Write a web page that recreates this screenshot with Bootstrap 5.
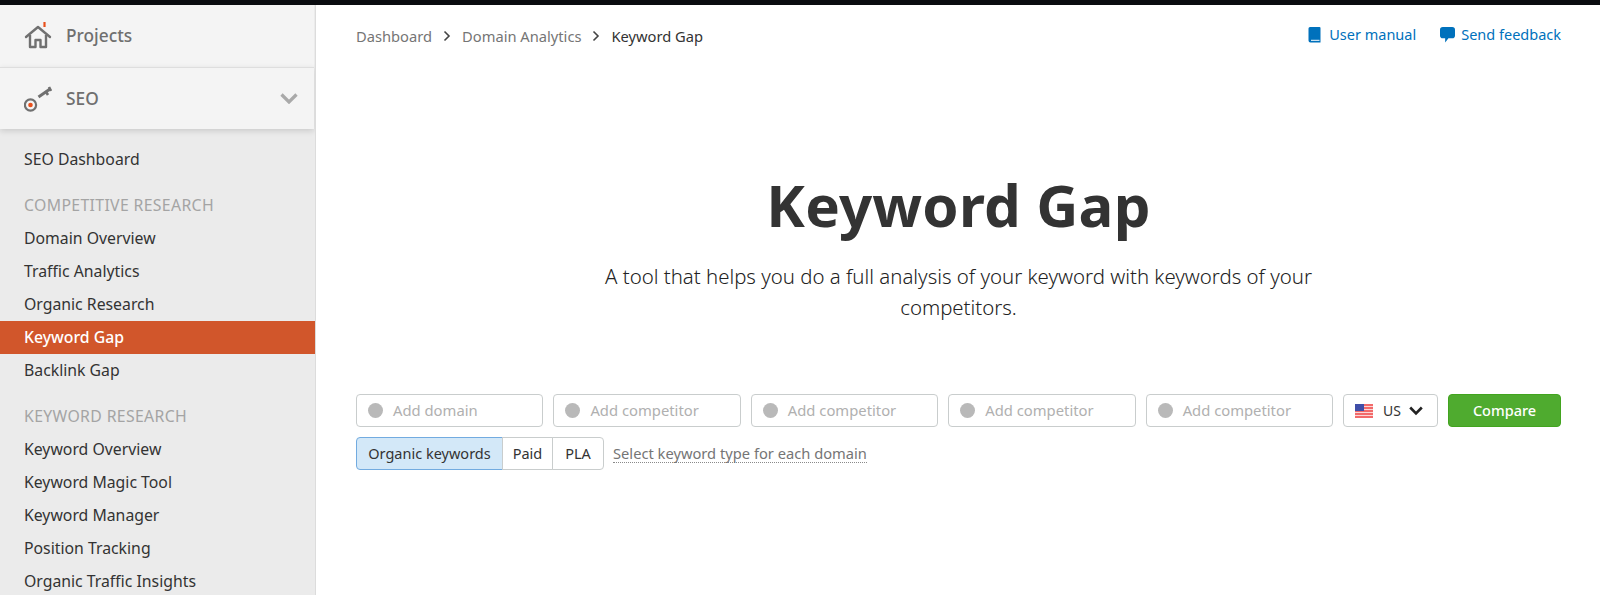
<!DOCTYPE html>
<html lang="en">
<head>
<meta charset="utf-8">
<title>Keyword Gap</title>
<link rel="stylesheet" href="https://cdn.jsdelivr.net/npm/bootstrap@5.3.0/dist/css/bootstrap.min.css">
<style>
html,body{height:595px;overflow:hidden;}
body{font-family:"Noto Sans","Liberation Sans",sans-serif;font-size:15.8px;color:#333;background:#fff;}
.topstrip{height:5px;background:#0a0c10;}
.shell{height:590px;}
.sidebar{width:316px;flex:none;background:#ebebeb;border-right:1px solid #dcdcdc;overflow:hidden;}
.side-head{height:62px;background:#f4f4f4;padding-left:24px;color:#6f6f6f;font-size:17.300px;font-weight:500;margin-right:1px;}
.side-head.seo{height:62px;border-top:1px solid #dedede;box-shadow:0 2px 6px rgba(0,0,0,.14);position:relative;padding-right:16px;}
.head-ico{width:28px;height:28px;margin-right:14px;flex:none;}
.side-list{padding-top:14px;}
.side-link{display:block;height:33px;line-height:33px;padding-left:24px;color:#333;text-decoration:none;}
.side-link.current{background:#d1562b;color:#fff;font-weight:500;}
.side-title{height:33px;line-height:33px;padding-left:24px;color:#a4a4a4;margin-top:13px;letter-spacing:.35px;}
.workspace{padding:0 39px 0 40px;min-width:0;}
.crumbrow{height:62px;font-size:14.700px;}
.crumb-item{color:#757575;}
.crumb-item.here{color:#333;}
.crumb-sep{width:30px;flex:none;text-align:center;line-height:0;}
.help-link{color:#0071bc;text-decoration:none;font-size:14.500px;margin-top:-3px;}
.page-h{font-size:58.200px;font-weight:700;line-height:72px;margin:102px 0 0;color:#333;letter-spacing:.2px;}
.page-sub{width:760px;font-size:20.400px;line-height:31px;margin:20px auto 0;font-weight:300;color:#222;}
.domain-row{margin-top:71px;gap:10px;}
.dom-field{flex:1 1 0;height:33px;border:1px solid #c9cdcd;border-radius:4px;padding-left:11px;color:#b0b0b0;font-size:14.800px;background:#fff;}
.dom-dot{width:15px;height:15px;background:#b9b9b9;border-radius:50%;margin-right:10px;flex:none;}
.db-pick{width:95px;height:33px;flex:none;border:1px solid #c9cdcd;border-radius:4px;padding-left:11px;font-size:14px;color:#333;}
.db-pick span{margin:0 8px 0 10px;}
.go-btn{width:113px;height:33px;flex:none;padding:0;background:#4fab2f;border:1px solid #42a41f;color:#fff;font-size:14.500px;font-weight:500;border-radius:4px;}
.type-row{margin-top:10px;}
.type-group .btn{height:33px;padding:0;font-size:14.500px;color:#333;border-color:#c9cdcd;background:#fff;border-radius:4px;}
.type-group .btn.t1{width:147px;background:#d3e8f8;border-color:#72abe0;color:#333;}
.type-group .btn.t2{width:51px;}
.type-group .btn.t3{width:52px;}
.type-hint{margin-left:9px;color:#757575;font-size:14.700px;line-height:17px;border-bottom:1px dotted #8a8a8a;}
.fb-ico{margin-right:6px;}
</style>
</head>
<body>
<div class="topstrip"></div>
<div class="shell d-flex">
  <aside class="sidebar">
    <div class="side-head d-flex align-items-center">
      <svg class="head-ico" viewBox="0 0 28 28" fill="none"><path d="M2 15 14 5l12 10" stroke="#707070" stroke-width="2.400" stroke-linecap="round" stroke-linejoin="round"/><path d="M6 13v12h5.500v-7h5v7H22V13" stroke="#707070" stroke-width="2.400" stroke-linejoin="round"/><path d="M20.500 0v5" stroke="#e8501c" stroke-width="2.200"/></svg>
      <span>Projects</span>
    </div>
    <div class="side-head seo d-flex align-items-center">
      <svg class="head-ico" viewBox="0 0 28 28" fill="none"><circle cx="6.500" cy="20" r="5.600" stroke="#707070" stroke-width="2.200"/><circle cx="6.500" cy="20" r="2.300" fill="#e8501c"/><path d="M14.500 12 26 4" stroke="#707070" stroke-width="3"/><path d="M21.500 6l2.500 4M25 2l2 4" stroke="#707070" stroke-width="2.600"/></svg>
      <span>SEO</span>
      <svg class="ms-auto" width="18" height="11" viewBox="0 0 18 11" fill="none"><path d="M1.500 1.500 9 9l7.500-7.500" stroke="#a9a9a9" stroke-width="3.200"/></svg>
    </div>
    <nav class="side-list">
      <a class="side-link" href="#">SEO Dashboard</a>
      <div class="side-title">COMPETITIVE RESEARCH</div>
      <a class="side-link" href="#">Domain Overview</a>
      <a class="side-link" href="#">Traffic Analytics</a>
      <a class="side-link" href="#">Organic Research</a>
      <a class="side-link current" href="#">Keyword Gap</a>
      <a class="side-link" href="#">Backlink Gap</a>
      <div class="side-title">KEYWORD RESEARCH</div>
      <a class="side-link" href="#">Keyword Overview</a>
      <a class="side-link" href="#">Keyword Magic Tool</a>
      <a class="side-link" href="#">Keyword Manager</a>
      <a class="side-link" href="#">Position Tracking</a>
      <a class="side-link" href="#">Organic Traffic Insights</a>
    </nav>
  </aside>
  <main class="workspace flex-grow-1">
    <div class="crumbrow d-flex align-items-center">
      <span class="crumb-item">Dashboard</span>
      <span class="crumb-sep"><svg width="8" height="12" viewBox="0 0 8 12" fill="none"><path d="M1.500 1.500 6 6l-4.500 4.500" stroke="#444" stroke-width="1.600"/></svg></span>
      <span class="crumb-item">Domain Analytics</span>
      <span class="crumb-sep"><svg width="8" height="12" viewBox="0 0 8 12" fill="none"><path d="M1.500 1.500 6 6l-4.500 4.500" stroke="#444" stroke-width="1.600"/></svg></span>
      <span class="crumb-item here">Keyword Gap</span>
      <a class="help-link ms-auto d-flex align-items-center" href="#">
        <svg class="me-2" width="13" height="16" viewBox="0 0 13 16"><path d="M2 0h9.500a1 1 0 0 1 1 1v14.500H2.500A2 2 0 0 1 .5 13.500V1.500A1.500 1.500 0 0 1 2 0Z" fill="#0071bc"/><path d="M3 13.300h8.500" stroke="#fff"/></svg>User manual</a>
      <a class="help-link ms-4 d-flex align-items-center" href="#">
        <svg class="fb-ico" width="15" height="16" viewBox="0 0 16 17"><path d="M3 0h10a3 3 0 0 1 3 3v6a3 3 0 0 1-3 3H9l-3.500 4.500V12H3a3 3 0 0 1-3-3V3a3 3 0 0 1 3-3Z" fill="#0071bc"/></svg>Send feedback</a>
    </div>
    <h1 class="page-h text-center">Keyword Gap</h1>
    <p class="page-sub text-center">A tool that helps you do a full analysis of your keyword with keywords of your competitors.</p>
    <div class="domain-row d-flex">
      <div class="dom-field d-flex align-items-center"><i class="dom-dot"></i>Add domain</div>
      <div class="dom-field d-flex align-items-center"><i class="dom-dot"></i>Add competitor</div>
      <div class="dom-field d-flex align-items-center"><i class="dom-dot"></i>Add competitor</div>
      <div class="dom-field d-flex align-items-center"><i class="dom-dot"></i>Add competitor</div>
      <div class="dom-field d-flex align-items-center"><i class="dom-dot"></i>Add competitor</div>
      <div class="db-pick d-flex align-items-center">
        <svg width="18" height="14" viewBox="0 0 18 14"><rect width="18" height="14" fill="#f26a6a"/><path d="M0 2.500h18M0 5.500h18M0 8.500h18M0 11.500h18" stroke="#fbd6d6" stroke-width="1"/><rect width="9" height="7" fill="#3f4ea8"/></svg>
        <span>US</span>
        <svg width="14" height="10" viewBox="0 0 14 10" fill="none"><path d="M1.200 1.500 7 7.500l5.800-6" stroke="#222" stroke-width="2.600"/></svg>
      </div>
      <button class="btn go-btn" type="button">Compare</button>
    </div>
    <div class="type-row d-flex align-items-center">
      <div class="btn-group type-group" role="group">
        <button class="btn t1" type="button">Organic keywords</button>
        <button class="btn t2" type="button">Paid</button>
        <button class="btn t3" type="button">PLA</button>
      </div>
      <span class="type-hint">Select keyword type for each domain</span>
    </div>
  </main>
</div>
<script src="https://cdn.jsdelivr.net/npm/bootstrap@5.3.0/dist/js/bootstrap.bundle.min.js"></script>
</body>
</html>
